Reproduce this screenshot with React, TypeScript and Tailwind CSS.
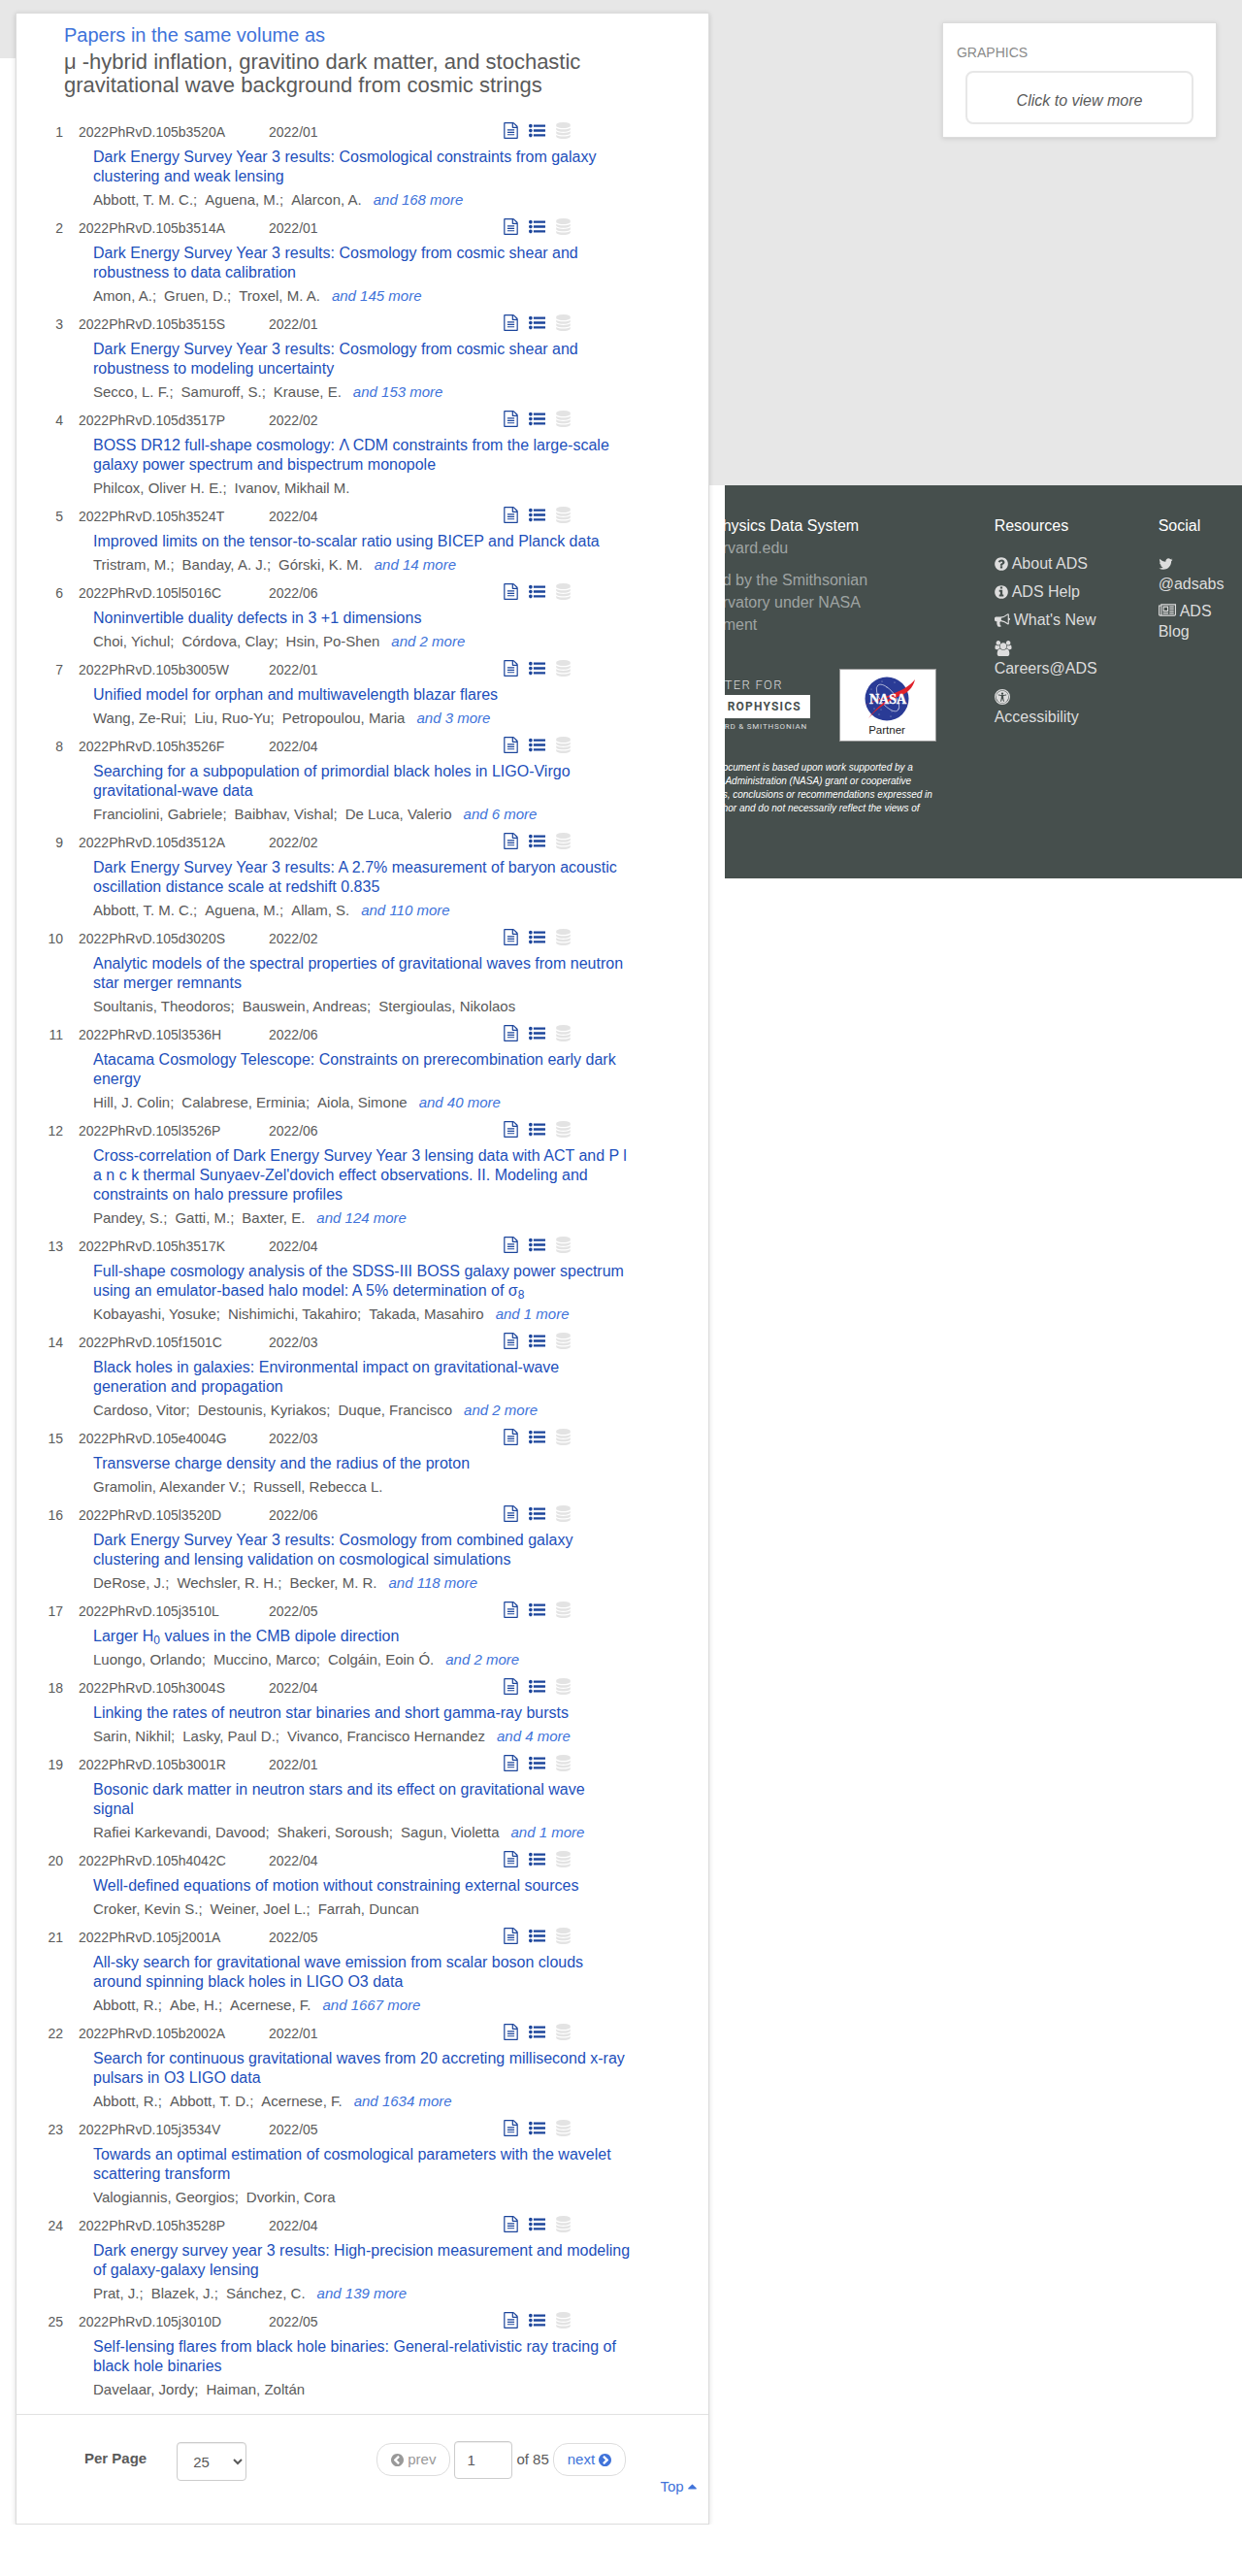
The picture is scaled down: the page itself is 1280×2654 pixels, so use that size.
import React, { useState } from "react";

const ICONS = {
  file: {
    box: "128 0 1536 1792",
    d: "M1596 380q28 28 48 76t20 88v1152q0 40-28 68t-68 28h-1344q-40 0-68-28t-28-68v-1600q0-40 28-68t68-28h896q40 0 88 20t76 48zm-444-244v376h376q-10-29-22-41l-313-313q-12-12-41-22zm384 1528v-1024h-416q-40 0-68-28t-28-68v-416h-768v1536h1280zm-1024-864q0-14 9-23t23-9h704q14 0 23 9t9 23v64q0 14-9 23t-23 9h-704q-14 0-23-9t-9-23v-64zm736 224q14 0 23 9t9 23v64q0 14-9 23t-23 9h-704q-14 0-23-9t-9-23v-64q0-14 9-23t23-9h704zm0 256q14 0 23 9t9 23v64q0 14-9 23t-23 9h-704q-14 0-23-9t-9-23v-64q0-14 9-23t23-9h704z",
  },
  list: {
    box: "0 0 1792 1792",
    d: "M384 1408q0 80-56 136t-136 56-136-56-56-136 56-136 136-56 136 56 56 136zm0-512q0 80-56 136t-136 56-136-56-56-136 56-136 136-56 136 56 56 136zm1408 416v192q0 13-9.5 22.5t-22.5 9.5h-1216q-13 0-22.5-9.5t-9.5-22.5v-192q0-13 9.5-22.5t22.5-9.5h1216q13 0 22.5 9.5t9.5 22.5zm-1408-928q0 80-56 136t-136 56-136-56-56-136 56-136 136-56 136 56 56 136zm1408 416v192q0 13-9.5 22.5t-22.5 9.5h-1216q-13 0-22.5-9.5t-9.5-22.5v-192q0-13 9.5-22.5t22.5-9.5h1216q13 0 22.5 9.5t9.5 22.5zm0-512v192q0 13-9.5 22.5t-22.5 9.5h-1216q-13 0-22.5-9.5t-9.5-22.5v-192q0-13 9.5-22.5t22.5-9.5h1216q13 0 22.5 9.5t9.5 22.5z",
  },
  database: {
    box: "128 0 1536 1792",
    d: "M896 768q237 0 443-43t325-127v170q0 69-103 128t-280 93.5-385 34.5-385-34.5-280-93.5-103-128v-170q119 84 325 127t443 43zm0 768q237 0 443-43t325-127v170q0 69-103 128t-280 93.5-385 34.5-385-34.5-280-93.5-103-128v-170q119 84 325 127t443 43zm0-384q237 0 443-43t325-127v170q0 69-103 128t-280 93.5-385 34.5-385-34.5-280-93.5-103-128v-170q119 84 325 127t443 43zm0-1152q208 0 385 34.5t280 93.5 103 128v128q0 69-103 128t-280 93.5-385 34.5-385-34.5-280-93.5-103-128v-128q0-69 103-128t280-93.5 385-34.5z",
  },
  question: {
    box: "128 0 1536 1792",
    d: "M1024 1376v-192q0-14-9-23t-23-9h-192q-14 0-23 9t-9 23v192q0 14 9 23t23 9h192q14 0 23-9t9-23zm256-672q0-88-55.5-163t-138.5-116-170-41q-243 0-371 213-15 24 8 42l132 100q7 6 19 6 16 0 25-12 53-68 86-92 34-24 86-24 48 0 85.5 26t37.5 59q0 38-20 61t-68 45q-63 28-115.5 86.5t-52.5 125.5v36q0 14 9 23t23 9h192q14 0 23-9t9-23q0-19 21.5-49.5t54.5-49.5q32-18 49-28.5t46-35 44.5-48 28-60.5 12.5-81zm384 192q0 209-103 385.5t-279.5 279.5-385.5 103-385.5-103-279.5-279.5-103-385.5 103-385.5 279.5-279.5 385.5-103 385.5 103 279.5 279.5 103 385.5z",
  },
  info: {
    box: "128 0 1536 1792",
    d: "M1152 1376v-160q0-14-9-23t-23-9h-96v-512q0-14-9-23t-23-9h-320q-14 0-23 9t-9 23v160q0 14 9 23t23 9h96v320h-96q-14 0-23 9t-9 23v160q0 14 9 23t23 9h448q14 0 23-9t9-23zm-128-896v-160q0-14-9-23t-23-9h-192q-14 0-23 9t-9 23v160q0 14 9 23t23 9h192q14 0 23-9t9-23zm640 416q0 209-103 385.5t-279.5 279.5-385.5 103-385.5-103-279.5-279.5-103-385.5 103-385.5 279.5-279.5 385.5-103 385.5 103 279.5 279.5 103 385.5z",
  },
  bullhorn: {
    box: "0 0 1792 1792",
    d: "M1664 640q53 0 90.5 37.5t37.5 90.5-37.5 90.5-90.5 37.5v384q0 52-38 90t-90 38q-417-347-812-380-58 19-91 66t-31 100.5 40 92.5q-20 33-23 65.5t6 58 33.5 55 48 50 61.5 50.5q-29 58-111.5 83t-168.5 11.5-132-55.5q-7-23-29.5-87.5t-32-94.5-23-89-15-101 3.5-98.5 22-110.5h-122q-66 0-113-47t-47-113v-192q0-66 47-113t113-47h480q435 0 896-384 52 0 90 38t38 90v384zm-128 604v-954q-394 302-768 343v270q377 42 768 341z",
  },
  users: {
    box: "0 0 1920 1792",
    d: "M593 896q-162 5-265 128h-134q-82 0-138-40.5t-56-118.5q0-353 124-353 6 0 43.5 21t97.5 42.5 119 21.5q67 0 133-23-5 37-5 66 0 139 81 256zm1071 637q0 120-73 189.5t-194 69.5h-874q-121 0-194-69.5t-73-189.5q0-53 3.5-103.5t14-109 26.5-108.5 43-97.5 62-81 85.5-53.5 111.5-20q10 0 43 21.5t73 48 107 48 135 21.5 135-21.5 107-48 73-48 43-21.5q61 0 111.5 20t85.5 53.5 62 81 43 97.5 26.5 108.5 14 109 3.5 103.5zm-1024-1277q0 106-75 181t-181 75-181-75-75-181 75-181 181-75 181 75 75 181zm704 384q0 159-112.5 271.5t-271.5 112.5-271.5-112.5-112.5-271.5 112.5-271.5 271.5-112.5 271.5 112.5 112.5 271.5zm576 225q0 78-56 118.5t-138 40.5h-134q-103-123-265-128 81-117 81-256 0-29-5-66 66 23 133 23 59 0 119-21.5t97.5-42.5 43.5-21q124 0 124 353zm-128-609q0 106-75 181t-181 75-181-75-75-181 75-181 181-75 181 75 75 181z",
  },
  access: {
    box: "0 0 1792 1792",
    d: "M1374 657q-6-26-28.5-39.5t-48.5-7.5q-261 62-401 62t-401-62q-26-6-48.5 7.5t-28.5 39.5 7.5 48.5 39.5 28.5q194 46 303 58-2 158-15.5 269t-26.5 155.5-41 115.5l-9 21q-10 25 1 49t36 34q9 4 23 4 44 0 60-41l8-20q54-139 71-259h42q17 120 71 259l8 20q16 41 60 41 14 0 23-4 25-10 36-34t1-49l-9-21q-28-71-41-115.5t-26.5-155.5-15.5-269q109-12 303-58 26-6 39.5-28.5t7.5-48.5zm-350-145q0-53-37.5-90.5t-90.5-37.5-90.5 37.5-37.5 90.5 37.5 90.5 90.5 37.5 90.5-37.5 37.5-90.5zm576 384a704 704 0 1 1-1408 0a704 704 0 1 1 1408 0zM896 128a768 768 0 1 0 0 1536a768 768 0 1 0 0-1536zM896 0a896 896 0 1 1 0 1792a896 896 0 1 1 0-1792z",
  },
  twitter: {
    box: "64 0 1664 1792",
    d: "M1684 408q-67 98-162 167 1 14 1 42 0 130-38 259.5t-115.5 248.5-184.5 210.5-258 146-323 54.5q-271 0-496-145 35 4 78 4 225 0 401-138-105-2-188-64.5t-114-159.5q33 5 61 5 43 0 85-11-112-23-185.5-111.5t-73.5-205.5v-4q68 38 146 41-66-44-105-115t-39-154q0-88 44-163 121 149 294.5 238.5t371.5 99.5q-8-38-8-74 0-134 94.5-228.5t228.5-94.5q140 0 236 102 109-21 205-78-37 115-142 178 93-10 186-50z",
  },
  newspaper: {
    box: "0 0 2048 1792",
    d: "M1024 512h-384v384h384v-384zm128 640v128h-640v-128h640zm0-768v640h-640v-640h640zm640 768v128h-512v-128h512zm0-256v128h-512v-128h512zm0-256v128h-512v-128h512zm0-256v128h-512v-128h512zm-1536 960v-960h-128v960q0 26 19 45t45 19 45-19 19-45zm1664 0v-1088h-1536v1088q0 33-11 64h1483q26 0 45-19t19-45zm128-1216v1216q0 80-56 136t-136 56h-1664q-80 0-136-56t-56-136v-1088h256v-128h1792z",
  },
  left: {
    box: "128 128 1536 1536",
    d: "M1037 1395l102-102q19-19 19-45t-19-45l-307-307 307-307q19-19 19-45t-19-45l-102-102q-19-19-45-19t-45 19l-454 454q-19 19-19 45t19 45l454 454q19 19 45 19t45-19zm627-499q0 209-103 385.5t-279.5 279.5-385.5 103-385.5-103-279.5-279.5-103-385.5 103-385.5 279.5-279.5 385.5-103 385.5 103 279.5 279.5 103 385.5z",
  },
  right: {
    box: "128 128 1536 1536",
    d: "M845 1395l454-454q19-19 19-45t-19-45l-454-454q-19-19-45-19t-45 19l-102 102q-19 19-19 45t19 45l307 307-307 307q-19 19-19 45t19 45l102 102q19 19 45 19t45-19zm819-499q0 209-103 385.5t-279.5 279.5-385.5 103-385.5-103-279.5-279.5-103-385.5 103-385.5 279.5-279.5 385.5-103 385.5 103 279.5 279.5 103 385.5z",
  },
  caret: {
    box: "384 640 1024 704",
    d: "M1408 1216q0 26-19 45t-45 19h-896q-26 0-45-19t-19-45 19-45l448-448q19-19 45-19t45 19l448 448q19 19 19 45z",
  },
};

function Icon({ name, className }: { name: keyof typeof ICONS; className: string }) {
  return (
    <svg viewBox={ICONS[name].box} className={className} fill="currentColor" fillRule={name === "access" ? "evenodd" : "nonzero"} aria-hidden="true">
      <path d={ICONS[name].d} />
    </svg>
  );
}

type Paper = { id: string; date: string; title: React.ReactNode; authors: string[]; more?: number };

const PAPERS: Paper[] = [
  { id: "105b3520A", date: "2022/01", title: "Dark Energy Survey Year 3 results: Cosmological constraints from galaxy clustering and weak lensing", authors: ["Abbott, T. M. C.", "Aguena, M.", "Alarcon, A."], more: 168 },
  { id: "105b3514A", date: "2022/01", title: "Dark Energy Survey Year 3 results: Cosmology from cosmic shear and robustness to data calibration", authors: ["Amon, A.", "Gruen, D.", "Troxel, M. A."], more: 145 },
  { id: "105b3515S", date: "2022/01", title: "Dark Energy Survey Year 3 results: Cosmology from cosmic shear and robustness to modeling uncertainty", authors: ["Secco, L. F.", "Samuroff, S.", "Krause, E."], more: 153 },
  { id: "105d3517P", date: "2022/02", title: "BOSS DR12 full-shape cosmology: Λ CDM constraints from the large-scale galaxy power spectrum and bispectrum monopole", authors: ["Philcox, Oliver H. E.", "Ivanov, Mikhail M."] },
  { id: "105h3524T", date: "2022/04", title: "Improved limits on the tensor-to-scalar ratio using BICEP and Planck data", authors: ["Tristram, M.", "Banday, A. J.", "Górski, K. M."], more: 14 },
  { id: "105l5016C", date: "2022/06", title: "Noninvertible duality defects in 3 +1 dimensions", authors: ["Choi, Yichul", "Córdova, Clay", "Hsin, Po-Shen"], more: 2 },
  { id: "105b3005W", date: "2022/01", title: "Unified model for orphan and multiwavelength blazar flares", authors: ["Wang, Ze-Rui", "Liu, Ruo-Yu", "Petropoulou, Maria"], more: 3 },
  { id: "105h3526F", date: "2022/04", title: "Searching for a subpopulation of primordial black holes in LIGO-Virgo gravitational-wave data", authors: ["Franciolini, Gabriele", "Baibhav, Vishal", "De Luca, Valerio"], more: 6 },
  { id: "105d3512A", date: "2022/02", title: "Dark Energy Survey Year 3 results: A 2.7% measurement of baryon acoustic oscillation distance scale at redshift 0.835", authors: ["Abbott, T. M. C.", "Aguena, M.", "Allam, S."], more: 110 },
  { id: "105d3020S", date: "2022/02", title: "Analytic models of the spectral properties of gravitational waves from neutron star merger remnants", authors: ["Soultanis, Theodoros", "Bauswein, Andreas", "Stergioulas, Nikolaos"] },
  { id: "105l3536H", date: "2022/06", title: "Atacama Cosmology Telescope: Constraints on prerecombination early dark energy", authors: ["Hill, J. Colin", "Calabrese, Erminia", "Aiola, Simone"], more: 40 },
  { id: "105l3526P", date: "2022/06", title: "Cross-correlation of Dark Energy Survey Year 3 lensing data with ACT and P l a n c k thermal Sunyaev-Zel'dovich effect observations. II. Modeling and constraints on halo pressure profiles", authors: ["Pandey, S.", "Gatti, M.", "Baxter, E."], more: 124 },
  { id: "105h3517K", date: "2022/04", title: <>Full-shape cosmology analysis of the SDSS-III BOSS galaxy power spectrum using an emulator-based halo model: A 5% determination of σ<sub className="text-xs">8</sub></>, authors: ["Kobayashi, Yosuke", "Nishimichi, Takahiro", "Takada, Masahiro"], more: 1 },
  { id: "105f1501C", date: "2022/03", title: "Black holes in galaxies: Environmental impact on gravitational-wave generation and propagation", authors: ["Cardoso, Vitor", "Destounis, Kyriakos", "Duque, Francisco"], more: 2 },
  { id: "105e4004G", date: "2022/03", title: "Transverse charge density and the radius of the proton", authors: ["Gramolin, Alexander V.", "Russell, Rebecca L."] },
  { id: "105l3520D", date: "2022/06", title: "Dark Energy Survey Year 3 results: Cosmology from combined galaxy clustering and lensing validation on cosmological simulations", authors: ["DeRose, J.", "Wechsler, R. H.", "Becker, M. R."], more: 118 },
  { id: "105j3510L", date: "2022/05", title: <>Larger H<sub className="text-xs">0</sub> values in the CMB dipole direction</>, authors: ["Luongo, Orlando", "Muccino, Marco", "Colgáin, Eoin Ó."], more: 2 },
  { id: "105h3004S", date: "2022/04", title: "Linking the rates of neutron star binaries and short gamma-ray bursts", authors: ["Sarin, Nikhil", "Lasky, Paul D.", "Vivanco, Francisco Hernandez"], more: 4 },
  { id: "105b3001R", date: "2022/01", title: <>Bosonic dark matter in neutron stars and its effect on gravitational wave<br />signal</>, authors: ["Rafiei Karkevandi, Davood", "Shakeri, Soroush", "Sagun, Violetta"], more: 1 },
  { id: "105h4042C", date: "2022/04", title: "Well-defined equations of motion without constraining external sources", authors: ["Croker, Kevin S.", "Weiner, Joel L.", "Farrah, Duncan"] },
  { id: "105j2001A", date: "2022/05", title: "All-sky search for gravitational wave emission from scalar boson clouds around spinning black holes in LIGO O3 data", authors: ["Abbott, R.", "Abe, H.", "Acernese, F."], more: 1667 },
  { id: "105b2002A", date: "2022/01", title: "Search for continuous gravitational waves from 20 accreting millisecond x-ray pulsars in O3 LIGO data", authors: ["Abbott, R.", "Abbott, T. D.", "Acernese, F."], more: 1634 },
  { id: "105j3534V", date: "2022/05", title: "Towards an optimal estimation of cosmological parameters with the wavelet scattering transform", authors: ["Valogiannis, Georgios", "Dvorkin, Cora"] },
  { id: "105h3528P", date: "2022/04", title: "Dark energy survey year 3 results: High-precision measurement and modeling of galaxy-galaxy lensing", authors: ["Prat, J.", "Blazek, J.", "Sánchez, C."], more: 139 },
  { id: "105j3010D", date: "2022/05", title: "Self-lensing flares from black hole binaries: General-relativistic ray tracing of black hole binaries", authors: ["Davelaar, Jordy", "Haiman, Zoltán"] },
];

function PaperRow({ paper, index }: { paper: Paper; index: number }) {
  return (
    <li className="pb-[9px]">
      <div className="flex h-5 items-start text-sm">
        <span className="w-12 text-right">{index}</span>
        <a href="#abs" className="ml-4 w-[196px]">2022PhRvD.{paper.id}</a>
        <span className="w-[242px]">{paper.date}</span>
        <span className="flex gap-[11px] text-[#1c459b]">
          <button type="button" aria-label="Full text sources"><Icon name="file" className="h-[17px] w-[15px]" /></button>
          <button type="button" aria-label="Citations and references"><Icon name="list" className="size-[17px]" /></button>
          <button type="button" aria-label="Data products" disabled className="text-[#e3e3e3]"><Icon name="database" className="h-[17px] w-[15px]" /></button>
        </span>
      </div>
      <div className="px-[79px]">
        <h3 className="mt-1.5 text-base leading-5 text-[#1d4fbb] [&_sub]:leading-none"><a href="#abs">{paper.title}</a></h3>
        <ul className="mt-1 flex gap-2 text-[15px] leading-5">
          {paper.authors.map((a, i) => (
            <li key={a}>{a}{i < paper.authors.length - 1 ? ";" : ""}</li>
          ))}
          {paper.more && <li className="ml-1 italic text-[#4073da]"><a href="#abs">and {paper.more} more</a></li>}
        </ul>
      </div>
    </li>
  );
}

function Pagination() {
  const [page, setPage] = useState("1");
  return (
    <div className="border-t border-[#e1e1e1] pt-7 pr-3 pb-7 pl-[70px] text-[15px] leading-5">
      <div className="flex h-10 items-center">
        <label htmlFor="per-page" className="mb-1.5 font-bold">Per Page</label>
        <select id="per-page" defaultValue="25" className="ml-[31px] h-10 w-[72px] rounded border border-[#ccc] bg-white px-3 shadow-[inset_0_1px_1px_rgba(0,0,0,0.075)]">
          <option>25</option>
          <option>50</option>
          <option>100</option>
        </select>
        <nav aria-label="Pages" className="mb-1 ml-[134px] flex items-center gap-1">
          <button type="button" disabled className="flex h-[34px] items-center gap-1 rounded-[15px] border border-[#ddd] px-3.5 text-[#999]">
            <Icon name="left" className="size-[13px]" />prev
          </button>
          <input aria-label="Page" value={page} onChange={(e) => setPage(e.target.value)} className="h-[39px] w-[60px] rounded border border-[#ccc] px-3 shadow-[inset_0_1px_1px_rgba(0,0,0,0.075)]" />
          <span className="whitespace-nowrap">of 85</span>
          <button type="button" className="flex h-[34px] items-center gap-1 rounded-[15px] border border-[#ddd] px-3.5 text-[#4073da]">
            next<Icon name="right" className="size-[13px]" />
          </button>
        </nav>
      </div>
      <div className="-mt-1 flex justify-end">
        <a href="#top" className="flex items-center gap-1 text-[#4073da]">Top <Icon name="caret" className="h-1.5 w-[9px]" /></a>
      </div>
    </div>
  );
}

function NasaLogo() {
  return (
    <svg viewBox="0 0 100 75" className="h-[75px] w-[100px]" role="img" aria-label="NASA Partner">
      <rect x="0.5" y="0.5" width="99" height="74" fill="#fff" stroke="#999" />
      <circle cx="49" cy="31" r="22.5" fill="#2a3b96" />
      <g fill="#fff" opacity="0.6">
        <circle cx="44" cy="13" r="0.6" /><circle cx="57" cy="14" r="0.6" /><circle cx="61" cy="41" r="0.6" /><circle cx="36" cy="41" r="0.6" /><circle cx="41" cy="47" r="0.6" /><circle cx="53" cy="49" r="0.6" /><circle cx="33" cy="21" r="0.5" /><circle cx="49" cy="19" r="0.5" /><circle cx="54" cy="44" r="0.5" /><circle cx="43" cy="42" r="0.5" />
      </g>
      <ellipse cx="50" cy="30" rx="7.500" ry="16.500" fill="none" stroke="#fff" strokeOpacity="0.8" strokeWidth="0.7" transform="rotate(-38 50 30)" />
      <path d="M24 38C36 33 48 29 57 25C67 21 73 17 78 11C76 20 70 25.500 60 29C49 34 39 41 30 51C37 41.500 46 33.500 56 28C46 30.500 34 34.500 24 38Z" fill="#e0222c" />
      <text x="50" y="36" textAnchor="middle" fontFamily="Liberation Serif, serif" fontWeight="700" fontSize="14" fill="#fff" stroke="#fff" strokeWidth="0.4">NASA</text>
      <text x="49" y="67" textAnchor="middle" fontFamily="Liberation Sans, sans-serif" fontSize="11.500" fill="#222">Partner</text>
    </svg>
  );
}

function FooterLink({ icon, size, stacked, children }: { icon: keyof typeof ICONS; size: string; stacked?: boolean; children: React.ReactNode }) {
  return (
    <li>
      <a href="#link" className={stacked ? "flex flex-col" : "flex items-center gap-1"}>
        <span className="flex h-[21px] items-center"><Icon name={icon} className={size} /></span>
        <span>{children}</span>
      </a>
    </li>
  );
}

function Footer() {
  return (
    <footer className="flex h-[405px] overflow-hidden bg-[#464f4d] pt-[30px] text-base text-[#ddd]">
      <div className="w-[278px] shrink-0">
        <div className="-ml-0.5 leading-[23px] whitespace-nowrap text-[#9fa4a3]">
          <p className="text-white">hysics Data System</p>
          <p>rvard.edu</p>
          <p className="mt-2.5">d by the Smithsonian</p>
          <p>rvatory under NASA</p>
          <p>ment</p>
        </div>
        <div className="mt-[34px] flex items-start">
          <div className="flex w-[118px] flex-col items-start pt-2 font-[Roboto,sans-serif] whitespace-nowrap">
            <p className="text-[13px] leading-[17px] font-light tracking-widest">TER FOR</p>
            <p className="mt-0.5 h-6 w-[88px] bg-white pl-[3px] text-xs leading-6 font-bold tracking-widest text-[#464f4d]">ROPHYSICS</p>
            <p className="mt-1 text-[8px] leading-[10px] tracking-widest">RD &amp; SMITHSONIAN</p>
          </div>
          <NasaLogo />
        </div>
        <p className="mt-5 -ml-0.5 text-[10px] leading-[14px] whitespace-nowrap text-white italic">
          ocument is based upon work supported by a<br />
          &nbsp;Administration (NASA) grant or cooperative<br />
          s, conclusions or recommendations expressed in<br />
          hor and do not necessarily reflect the views of
        </p>
      </div>
      <div className="w-[169px] shrink-0">
        <h4 className="leading-[23px] text-white">Resources</h4>
        <ul className="mt-[17px] flex flex-col gap-2 leading-[21px]">
          <FooterLink icon="question" size="h-4 w-3.5">About ADS</FooterLink>
          <FooterLink icon="info" size="h-4 w-3.5">ADS Help</FooterLink>
          <FooterLink icon="bullhorn" size="size-4">What's New</FooterLink>
          <FooterLink icon="users" size="h-4 w-[18px]" stacked>Careers@ADS</FooterLink>
          <FooterLink icon="access" size="size-4" stacked>Accessibility</FooterLink>
        </ul>
      </div>
      <div className="w-[72px] shrink-0">
        <h4 className="leading-[23px] text-white">Social</h4>
        <ul className="mt-[17px] flex flex-col gap-[7px] leading-[21px]">
          <FooterLink icon="twitter" size="h-4 w-[15px]" stacked>@adsabs</FooterLink>
          <li>
            <a href="#link"><Icon name="newspaper" className="mr-1 inline h-4 w-[18px] align-[-2px]" />ADS Blog</a>
          </li>
        </ul>
      </div>
    </footer>
  );
}

export default function App() {
  return (
    <div className="bg-white font-['Liberation_Sans',Arial,sans-serif] text-[#5a5a5a]">
      <div className="h-[13px] bg-[#e7e7e7]" />
      <div className="flex items-start">
        <div className="flex w-7/12 items-start">
          <div className="h-[47px] w-4 shrink-0 bg-[#e7e7e7]" />
          <main className="z-10 flex-1 border border-[#dcdcdc] bg-white shadow-[0_1px_5px_rgba(0,0,0,0.15)]">
            <header className="px-[49px] pt-2.5">
              <p className="text-xl leading-6 text-[#4073da]">Papers in the same volume as</p>
              <h2 className="mt-1 text-[22px] leading-6">μ -hybrid inflation, gravitino dark matter, and stochastic gravitational wave background from cosmic strings</h2>
            </header>
            <ol className="mt-[26px] pb-1.5">
              {PAPERS.map((p, i) => <PaperRow key={p.id} paper={p} index={i + 1} />)}
            </ol>
            <Pagination />
          </main>
          <div className="h-[487px] w-4 shrink-0 bg-[#e7e7e7]" />
        </div>
        <div className="w-5/12">
          <div className="flex h-[487px] items-start justify-end bg-[#e7e7e7] pt-2.5 pr-[26px]">
            <section className="w-[283px] border border-[#dcdcdc] bg-white px-3.5 pt-5 pb-[13px] shadow-[0_1px_5px_rgba(0,0,0,0.12)]">
              <h3 className="text-sm leading-5 text-[#8a8a8a]">GRAPHICS</h3>
              <button type="button" className="mt-[9px] ml-[9px] flex h-[55px] w-[235px] items-center justify-center rounded-lg border-2 border-[#e7e7e7] pt-1.5 text-base italic">Click to view more</button>
            </section>
          </div>
          <Footer />
        </div>
      </div>
    </div>
  );
}
